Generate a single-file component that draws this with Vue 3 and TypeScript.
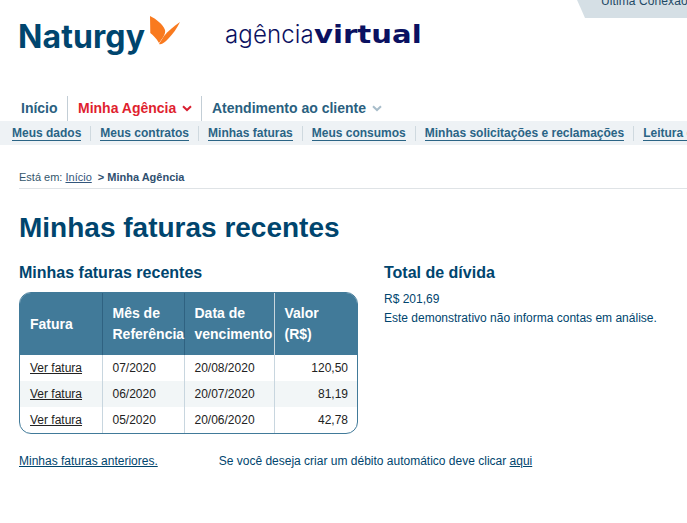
<script setup lang="ts">
const mainNav = [
  { label: 'Início', kind: 'plain' },
  { label: 'Minha Agência', kind: 'active' },
  { label: 'Atendimento ao cliente', kind: 'more' },
]
const subNav = ['Meus dados', 'Meus contratos', 'Minhas faturas', 'Meus consumos', 'Minhas solicitações e reclamações', 'Leitura do medidor']
const rows = [
  { mes: '07/2020', venc: '20/08/2020', valor: '120,50' },
  { mes: '06/2020', venc: '20/07/2020', valor: '81,19' },
  { mes: '05/2020', venc: '20/06/2020', valor: '42,78' },
]
</script>

<template>
  <div class="page">
    <div class="session">Última Conexão</div>
    <header class="brand">
      <div class="naturgy">
        <span class="naturgy-word">Naturgy</span>
        <svg class="butterfly" width="31" height="30" viewBox="0 0 31 30">
          <path d="M0 0 C6 3 13 8 15 14 C16 18 12 23 9 27 C6 22 3 19 0.300 17 Z" fill="#f97a1f" />
          <path d="M30 6 C24 10 18 15 14 20 L9 28 C12 29 15 26 18 23 C23 18 27 12 30 6 Z" fill="#f97a1f" />
        </svg>
      </div>
      <div class="agencia"><span class="ag-light">agência</span><span class="ag-bold">virtual</span></div>
    </header>
    <nav class="main-nav">
      <a v-for="item in mainNav" :key="item.label" class="main-item" :class="item.kind">
        {{ item.label }}
        <svg v-if="item.kind !== 'plain'" class="chev" width="10" height="7" viewBox="0 0 10 7">
          <path d="M1 1.200 L5 5 L9 1.200" fill="none" stroke="currentColor" stroke-width="2" />
        </svg>
      </a>
    </nav>
    <nav class="sub-nav">
      <a v-for="item in subNav" :key="item" class="sub-item"><span>{{ item }}</span></a>
    </nav>
    <div class="crumbs">Está em: <a class="crumb-link">Início</a><b class="crumb-here">&gt; Minha Agência</b></div>
    <main class="content">
      <h1>Minhas faturas recentes</h1>
      <div class="cols">
        <section class="left">
          <h2>Minhas faturas recentes</h2>
          <div class="table-box">
            <table>
              <thead>
                <tr>
                  <th class="c1 fatura">Fatura</th>
                  <th class="c2">Mês de Referência</th>
                  <th class="c3">Data de vencimento</th>
                  <th class="c4">Valor<br />(R$)</th>
                </tr>
              </thead>
              <tbody>
                <tr v-for="r in rows" :key="r.mes">
                  <td><a class="link">Ver fatura</a></td>
                  <td>{{ r.mes }}</td>
                  <td>{{ r.venc }}</td>
                  <td class="num">{{ r.valor }}</td>
                </tr>
              </tbody>
            </table>
          </div>
        </section>
        <section class="right">
          <h2>Total de dívida</h2>
          <p class="amount">R$ 201,69</p>
          <p class="note">Este demonstrativo não informa contas em análise.</p>
        </section>
      </div>
      <div class="foot">
        <a class="foot-link">Minhas faturas anteriores.</a>
        <span class="foot-text">Se você deseja criar um débito automático deve clicar <a class="foot-link">aqui</a></span>
      </div>
    </main>
  </div>
</template>

<style>
html, body { margin: 0; background: #fff; overflow: hidden; }
</style>

<style scoped>
.page {
  position: relative;
  width: 687px;
  height: 523px;
  overflow: hidden;
  font-family: "Liberation Sans", Arial, sans-serif;
  font-size: 12px;
  color: #00456e;
}
.session {
  position: absolute;
  top: -7px;
  left: 574px;
  width: 113px;
  height: 25px;
  box-sizing: border-box;
  padding: 1px 0 0 27px;
  background: #d5dfe5;
  clip-path: polygon(0 0, 100% 0, 100% 100%, 11px 100%);
  font-size: 12px;
  letter-spacing: 0.100px;
  color: #1f4a66;
  white-space: nowrap;
  overflow: hidden;
}
.brand {
  height: 96px;
  box-sizing: border-box;
  padding: 15px 0 0 18px;
  display: flex;
  align-items: flex-start;
}
.naturgy {
  width: 207px;
  display: flex;
  align-items: flex-start;
}
.naturgy-word {
  font-family: Inter, sans-serif;
  font-weight: 700;
  font-size: 32px;
  line-height: 44px;
  letter-spacing: 0.100px;
  color: #00456e;
}
.butterfly { margin-left: 5px; margin-top: 1px; flex: none; }
.agencia {
  padding-top: 5px;
  font-size: 24px;
  line-height: 30px;
  color: #0b1161;
  white-space: nowrap;
}
.ag-light { font-family: Inter, sans-serif; font-weight: 300; letter-spacing: 0.150px; }
.ag-bold {
  display: inline-block;
  font-family: "DejaVu Sans", sans-serif;
  font-weight: 700;
  font-size: 25px;
  transform: scaleX(1.165);
  transform-origin: left center;
}
.main-nav {
  height: 25px;
  display: flex;
  padding-left: 21px;
  font-size: 14px;
  font-weight: 700;
  color: #2a5f80;
}
.main-item {
  display: flex;
  align-items: center;
  height: 25px;
  box-sizing: border-box;
  padding-bottom: 2px;
  white-space: nowrap;
}
.main-item.plain { width: 46px; }
.main-item.active {
  width: 135px;
  padding-left: 10px;
  border-left: 1px solid #c3ced6;
  border-right: 1px solid #c3ced6;
  color: #e01f2f;
}
.main-item.more { padding-left: 10px; }
.chev { margin-left: 6px; margin-top: 1px; }
.active .chev { color: #d81f30; }
.more .chev { color: #a8bdca; }
.sub-nav {
  height: 24px;
  background: #eef2f5;
  display: flex;
  align-items: center;
  padding-left: 12px;
  white-space: nowrap;
  overflow: hidden;
  font-size: 12px;
  font-weight: 700;
  color: #2a6485;
}
.sub-item {
  display: block;
  padding-right: 9px;
  margin-right: 9px;
  border-right: 1px solid #cfd9df;
  line-height: 14px;
}
.sub-item span { display: inline-block; border-bottom: 1px solid #2a6485; line-height: 13px; }
.crumbs {
  margin: 25px 0 0 19px;
  height: 19px;
  box-sizing: border-box;
  padding-top: 1px;
  border-bottom: 1px solid #dfe3e6;
  font-size: 11px;
  line-height: 13px;
  color: #33566c;
}
.crumb-link { color: #33567c; text-decoration: underline; }
.crumb-here { margin-left: 6px; color: #2f4f6f; }
.content { padding: 0 0 0 19px; }
h1 {
  margin: 23px 0 0;
  font-size: 28px;
  line-height: 31px;
  font-weight: 700;
  color: #00456e;
}
.cols { display: flex; margin-top: 20px; }
.left { width: 365px; flex: none; }
h2 {
  margin: 0;
  font-size: 16px;
  line-height: 20px;
  font-weight: 700;
  color: #00456e;
}
.table-box {
  width: 339px;
  height: 142px;
  margin-top: 9px;
  box-sizing: border-box;
  border: 1px solid #417a99;
  border-radius: 12px;
  overflow: hidden;
}
table {
  width: 337px;
  border-collapse: collapse;
  table-layout: fixed;
  color: #222;
}
th {
  height: 62px;
  padding: 0 0 0 10px;
  background: #417a99;
  color: #fff;
  text-align: left;
  font-size: 14px;
  line-height: 21px;
  font-weight: 700;
  border-left: 1px solid #2f6281;
  box-sizing: border-box;
}
th:first-child, td:first-child { border-left: 0; }
th.c4 { border-left: 1px solid #c9d6de; }
.c1 { width: 82px; }
.c2 { width: 82px; }
.c3 { width: 90px; }
.c4 { width: 83px; }
th.fatura { padding-left: 10px; }
td {
  height: 26px;
  padding: 0 0 0 10px;
  box-sizing: border-box;
  border-left: 1px solid #c8d6df;
  font-size: 12px;
  line-height: 14px;
}
tbody tr:nth-child(2) td { background: #f2f6f7; }
.link { color: #222; text-decoration: underline; }
td.num { text-align: right; padding: 0 9px 0 0; }
.amount { margin: 9px 0 0; line-height: 14px; color: #00456e; }
.note { margin: 4px 0 0; line-height: 16px; color: #00456e; }
.foot {
  display: flex;
  margin-top: 20px;
  line-height: 14px;
  color: #00456e;
}
.foot-link { color: #00456e; text-decoration: underline; }
.foot-text { margin-left: 61px; }
</style>
